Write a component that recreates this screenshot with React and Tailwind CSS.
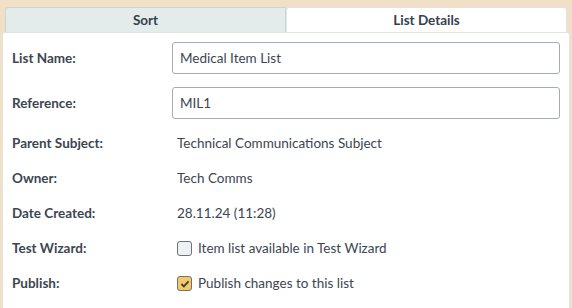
import React, { useState } from "react";

const rows = [
  { label: "Parent Subject:", value: "Technical Communications Subject" },
  { label: "Owner:", value: "Tech Comms" },
  { label: "Date Created:", value: "28.11.24 (11:28)" },
];

function Check({ checked, onChange, children }) {
  return (
    <label className="flex items-center gap-[6px] cursor-pointer">
      <span
        onClick={onChange}
        className={
          "flex h-[15px] w-[15px] items-center justify-center rounded-[3px] border border-[#68727c] " +
          (checked ? "bg-[#f6c964]" : "bg-[#eef2f5]")
        }
      >
        {checked && (
          <svg width="10" height="8" viewBox="0 0 11 9">
            <path d="M1.5 4.5 L4.2 7.2 L9.5 1.5" fill="none" stroke="#3a3f45" strokeWidth="2" />
          </svg>
        )}
      </span>
      <span>{children}</span>
    </label>
  );
}

export default function App() {
  const [name, setName] = useState("Medical Item List");
  const [ref, setRef] = useState("MIL1");
  const [wizard, setWizard] = useState(false);
  const [publish, setPublish] = useState(true);

  return (
    <div className="h-[308px] w-[572px] overflow-hidden bg-[#f1e0c6] pl-[2px] pr-[2px] pt-[7px] font-['Lato',sans-serif] text-[13.5px] text-[#3b4652]">
      <div className="flex px-[3px]">
        <div className="flex h-[25px] flex-1 items-center justify-center rounded-tl-[3px] border border-b-0 border-[#c9d6d8] bg-[#e3ebeb] font-bold text-[#36414c]">
          Sort
        </div>
        <div className="flex h-[25px] flex-1 items-center justify-center rounded-t-[3px] border border-b-0 border-[#dfe3e3] bg-white font-bold text-[#36414c]">
          List Details
        </div>
      </div>
      <div className="h-full rounded-t-[3px] border border-[#e2e4e0] bg-white pl-[9px] pr-[9px]">
        <div className="mt-[9px] flex h-[32px] items-center">
          <div className="w-[160px] font-bold">List Name:</div>
          <input
            value={name}
            onChange={(e) => setName(e.target.value)}
            className="h-[32px] flex-1 rounded-[3px] border border-[#a4abb1] px-[7px] outline-none"
          />
        </div>
        <div className="mt-[13px] flex h-[32px] items-center">
          <div className="w-[160px] font-bold">Reference:</div>
          <input
            value={ref}
            onChange={(e) => setRef(e.target.value)}
            className="h-[32px] flex-1 rounded-[3px] border border-[#a4abb1] px-[7px] outline-none"
          />
        </div>
        <div className="mt-[7px]">
          {rows.map((r) => (
            <div key={r.label} className="flex h-[35px] items-center">
              <div className="w-[165px] font-bold">{r.label}</div>
              <div>{r.value}</div>
            </div>
          ))}
          <div className="flex h-[35px] items-center">
            <div className="w-[165px] font-bold">Test Wizard:</div>
            <Check checked={wizard} onChange={() => setWizard(!wizard)}>
              Item list available in Test Wizard
            </Check>
          </div>
          <div className="flex h-[35px] items-center">
            <div className="w-[165px] font-bold">Publish:</div>
            <Check checked={publish} onChange={() => setPublish(!publish)}>
              Publish changes to this list
            </Check>
          </div>
        </div>
      </div>
    </div>
  );
}
